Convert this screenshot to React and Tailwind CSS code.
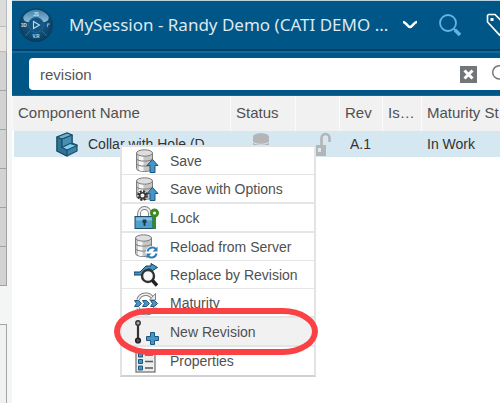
import React from "react";

function Compass() {
  return (
    <svg viewBox="0 0 36 36" className="size-9 shrink-0" aria-hidden="true">
      <defs>
        <radialGradient id="ball" cx="50%" cy="45%" r="55%">
          <stop offset="0" stopColor="#1c5f8c" />
          <stop offset="0.7" stopColor="#0f4a70" />
          <stop offset="1" stopColor="#083a5e" />
        </radialGradient>
        <linearGradient id="shine" x1="0" y1="0" x2="0" y2="1">
          <stop offset="0" stopColor="#3f83ad" />
          <stop offset="1" stopColor="#8dbcd8" />
        </linearGradient>
      </defs>
      <circle cx="18" cy="18" r="17" fill="url(#ball)" />
      <path d="M5.500 9.500a15 15 0 0 1 25 0c1 4-2.500 6-5.500 5.500a8 8 0 0 0-14 0c-3 .5-6.500-1.500-5.500-5.500z" fill="url(#shine)" />
      <path d="M12 24l-5 5M24 24l5 5" stroke="#2f709a" strokeWidth="1" />
      <circle cx="18" cy="18" r="7.500" fill="#135582" stroke="#1f6490" />
      <path d="M15.500 14.500v7l6-3.500z" fill="none" stroke="#c3dbe8" strokeWidth="1.100" />
      <g fill="#cfe1ec" fontSize="4.500" fontWeight="700" fontFamily="Liberation Sans, sans-serif" textAnchor="middle">
        <text x="18" y="8.500">JS</text>
        <text x="6" y="19.500">3D</text>
        <text x="30" y="19.500">i²</text>
        <text x="18" y="31">V.R</text>
      </g>
    </svg>
  );
}

function Magnifier({ className }) {
  return (
    <svg viewBox="0 0 24 24" className={className} fill="none" stroke="currentColor" aria-hidden="true">
      <circle cx="10" cy="10" r="8" strokeWidth="1.800" />
      <path d="M15.500 15.500l2 2" strokeWidth="2" />
      <path d="M17 17l5 5" strokeWidth="3.500" />
    </svg>
  );
}

function Tag() {
  return (
    <svg viewBox="0 0 24 24" className="size-6 shrink-0" fill="none" stroke="#fff" strokeWidth="1.600" aria-hidden="true">
      <path d="M1.500 2.500v6.500l12 13 8-8-12.500-12.500h-6.500z" />
      <rect x="4.500" y="5" width="3" height="3" fill="#fff" stroke="none" />
    </svg>
  );
}

function Part() {
  return (
    <svg viewBox="0 0 24 26" className="block h-[26px] w-6" aria-hidden="true" stroke="#1c4f6b" strokeWidth="1.200" strokeLinejoin="round">
      <path d="M2 6l10-4 5 2v8l5 2v6l-10 5-10-5z" fill="#3c83a6" />
      <path d="M2 6l5 2v8.500l5 2.500v6l-10-5z" fill="#2f7397" />
      <path d="M7 8l10-4v8.500l-10 4z" fill="#4790b4" />
      <path d="M2 6l10-4 5 2-10 4z" fill="#6fb0cc" />
      <path d="M7 16.500l8-4 7 2-10 4.500z" fill="#7fd0f0" />
    </svg>
  );
}

function Disk() {
  return (
    <g stroke="#7c7c7c" strokeWidth="1">
      <path d="M2.500 5v15.500c0 4 16 4 16 0v-15.500z" fill="#c6c6c6" />
      <path d="M5 7v15c1 .8 3 1.200 4.500 1.200v-15z" fill="#f7f7f7" stroke="none" />
      <path d="M2.500 10.500c0 3.500 16 3.500 16 0M2.500 15.500c0 3.500 16 3.500 16 0" fill="none" />
      <ellipse cx="10.500" cy="5" rx="8" ry="3.200" fill="#dedede" />
    </g>
  );
}

const blueStroke = { fill: "#4596c8", stroke: "#1f567e", strokeWidth: 1 };

const icons = {
  save: (
    <>
      <Disk />
      <path d="M18.500 11.500l5.500 6h-3v7h-5v-7h-3z" {...blueStroke} />
    </>
  ),
  options: (
    <>
      <Disk />
      <path d="M18.500 11.500l5.500 6h-3v7h-5v-7h-3z" {...blueStroke} />
      <circle cx="8.500" cy="19.500" r="4.300" fill="none" stroke="#333" strokeWidth="2.200" strokeDasharray="2 1.380" />
      <circle cx="8.500" cy="19.500" r="2.800" fill="#f2f2f2" stroke="#333" strokeWidth="1.600" />
    </>
  ),
  lock: (
    <>
      <path d="M5 12v-3a5.500 6 0 0 1 11 0v3" fill="none" stroke="#808080" strokeWidth="3.800" />
      <path d="M5 12v-3a5.500 6 0 0 1 11 0v3" fill="none" stroke="#ececec" strokeWidth="2" />
      <rect x="1" y="11.500" width="18" height="12" fill="#4f9fcb" stroke="#1d4f70" />
      <path d="M2 12.500h16v3h-16z" fill="#83c0df" />
      <path d="M9 15h3v2.500h-1v3h-1v-3h-1z" fill="#263b49" stroke="#263b49" />
      <circle cx="20.500" cy="8" r="3" fill="none" stroke="#3a8a22" strokeWidth="3" />
      <path d="M20.500 11v13M20.500 18h-2.500" stroke="#3a8a22" strokeWidth="3" />
    </>
  ),
  reload: (
    <>
      <g transform="translate(-1 -1)">
        <Disk />
      </g>
      <circle cx="18" cy="18.500" r="6.500" fill="#fff" />
      <path d="M13.500 17.500a5 5 0 0 1 8.500-2.500M22.500 19.500a5 5 0 0 1-8.500 2.500" fill="none" stroke="#2f7fb0" strokeWidth="2" />
      <path d="M23.500 12.500v5h-5zM12.500 24.500v-5h5z" fill="#2f7fb0" />
    </>
  ),
  replace: (
    <>
      <path d="M0 10h6l6-6h5v-2.500l6.500 4-6.500 4v-2.500h-3.500l-6 6h-7.500z" {...blueStroke} stroke="#173b55" />
      <circle cx="14" cy="14" r="6" fill="#f7f7f7" stroke="#333" strokeWidth="2.400" />
      <path d="M18 18l5 5.500" stroke="#222" strokeWidth="3.400" />
    </>
  ),
  maturity: (
    <>
      <path d="M4 10a8 8 0 0 1 15-1M21 17a9 9 0 0 1-17 1" fill="none" stroke="#808080" strokeWidth="3.400" />
      <path d="M4 10a8 8 0 0 1 15-1M21 17a9 9 0 0 1-17 1" fill="none" stroke="#f2f2f2" strokeWidth="1.600" />
      <path d="M21.500 3.500v6.500h-6z" fill="#eee" stroke="#808080" />
      <path d="M.5 10.500h4l3 3-3 3h-4l2-3zM8.500 10.500h4l3 3-3 3h-4l2-3zM16.500 10.500h4l3 3-3 3h-4l2-3z" {...blueStroke} />
    </>
  ),
  revision: (
    <>
      <path d="M4 5v16" stroke="#333" strokeWidth="2.200" />
      <circle cx="4" cy="4" r="2.200" fill="#aaa" stroke="#333" strokeWidth="1.400" />
      <circle cx="4" cy="21.500" r="2.300" fill="#555" stroke="#222" strokeWidth="1.600" />
      <path d="M16.500 13.500h4v4h4v4h-4v4h-4v-4h-4v-4h4z" {...blueStroke} />
    </>
  ),
  properties: (
    <>
      <rect x="2" y="2" width="19" height="22" fill="#ededed" stroke="#777" strokeWidth="1.300" />
      <path d="M4.500 5h4v4h-4zM4.500 11.500h4v4h-4zM4.500 18h4v4h-4z" {...blueStroke} />
      <path d="M11 7h8M11 13.500h8M11 20h8" stroke="#555" strokeWidth="1.300" />
    </>
  ),
};

const menu = [
  { icon: "save", label: "Save" },
  { icon: "options", label: "Save with Options", group: true },
  { icon: "lock", label: "Lock", group: true },
  { icon: "reload", label: "Reload from Server" },
  { icon: "replace", label: "Replace by Revision" },
  { icon: "maturity", label: "Maturity", group: true },
  { icon: "revision", label: "New Revision", group: true, active: true },
  { icon: "properties", label: "Properties" },
];

function ContextMenu() {
  return (
    <ul className="absolute top-[145px] left-[120px] z-10 w-[196px] border-2 border-[#e1e3e4] border-b-[#cfd1d2] bg-white text-[14px] leading-5 text-[#505050]">
      {menu.map((item) => (
        <li
          key={item.label}
          className={`relative border-[#e4e5e6] last:border-b-0 ${item.group ? "h-[29px] border-b-2" : "h-7 border-b"} ${item.active ? "z-10 bg-[#f1f1f1]" : ""}`}
        >
          <button type="button" className="flex h-full w-full items-center gap-[11px] pl-3 text-left whitespace-nowrap">
            <svg viewBox="0 0 25 26" className="h-[26px] w-[25px] shrink-0" aria-hidden="true">
              {icons[item.icon]}
            </svg>
            {item.label}
          </button>
          {item.active && (
            <span className="pointer-events-none absolute -top-[10px] -right-1 -bottom-[10px] -left-2 rounded-[36px/24px] border-[6px] border-[#fa4144]" />
          )}
        </li>
      ))}
    </ul>
  );
}

function SideStrip() {
  return (
    <div className="flex w-3 shrink-0 flex-col bg-[#f4f5f5]">
      <div className="h-[27px] w-[7px] border-r border-b border-[#b9bbbc] bg-[#dcdcdc]" />
      <div className="h-[25px] w-[7px] border-r border-b border-[#b9bbbc] bg-[#e6e6df]" />
      {[1, 2, 3, 4, 5, 6].map((n) => (
        <div key={n} className="h-[39px] w-[7px] border-r border-b border-[#a0a2a3] bg-[#d2d2d2]" />
      ))}
      <div className="mt-[38px] w-[7px] flex-1 border-t border-r border-[#a2a5a6] bg-[#f1f1f1]" />
    </div>
  );
}

const headCell = "h-[35px] overflow-hidden border-l border-[#fbfbfb] pl-[5px] text-left font-normal whitespace-nowrap";

export default function App() {
  return (
    <div className="relative flex min-h-screen overflow-hidden bg-white font-['Liberation_Sans',Arial,sans-serif] text-[15px] text-[#505050]">
      <SideStrip />
      <main className="min-w-0 flex-1 overflow-hidden border-t border-[#b6d0df]">
        <header className="flex h-[50px] items-center border-b-2 border-[#00426a] bg-[#005686] pl-[6px] text-white">
          <Compass />
          <h1 className="ml-[15px] w-[318px] shrink-0 font-['Noto_Sans',sans-serif] text-[17px] leading-6 whitespace-nowrap text-[#dce9f1]">
            MySession - Randy Demo (CATI DEMO ...
          </h1>
          <button type="button" aria-label="Switch session" className="ml-[15px] shrink-0">
            <svg viewBox="0 0 16 10" className="h-[10px] w-4" fill="none" stroke="#fff" strokeWidth="2.500" aria-hidden="true">
              <path d="M1 2c3 0 4.500 5 7 5s4-5 7-5" />
            </svg>
          </button>
          <button type="button" aria-label="Search" className="ml-5 shrink-0 text-[#62b4ea]">
            <Magnifier className="size-6" />
          </button>
          <button type="button" aria-label="Tags" className="ml-6 shrink-0">
            <Tag />
          </button>
        </header>

        <form className="h-[45px] border-t-2 border-b border-[#14699b] bg-[#005686] pt-[5px] pl-[17px]">
          <div className="flex h-8 items-center rounded-l bg-white">
            <input
              type="text"
              aria-label="Search text"
              defaultValue="revision"
              className="h-8 min-w-0 flex-1 bg-transparent pl-[11px] text-[15px] text-[#555] outline-none"
            />
            <button type="reset" aria-label="Clear search" className="size-[17px] shrink-0 bg-[#737679]">
              <svg viewBox="0 0 17 17" className="size-[17px]" stroke="#fff" strokeWidth="3" aria-hidden="true">
                <path d="M4.500 4.500l8 8M12.500 4.500l-8 8" />
              </svg>
            </button>
            <div className="ml-[14px] w-[9px] shrink-0 overflow-hidden text-[#777]">
              <Magnifier className="size-[20px]" />
            </div>
          </div>
        </form>

        <table className="w-full table-fixed border-separate border-spacing-0">
          <colgroup>
            <col className="w-[218px]" />
            <col className="w-[65px]" />
            <col className="w-[44px]" />
            <col className="w-[43px]" />
            <col className="w-[39px]" />
            <col />
          </colgroup>
          <thead>
            <tr className="bg-[#f1f1f1]">
              <th className={headCell}>Component Name</th>
              <th className={headCell}>Status</th>
              <th className={headCell} aria-label="Lock state" />
              <th className={headCell}>Rev</th>
              <th className={headCell}>Is…</th>
              <th className={headCell}>Maturity St</th>
            </tr>
          </thead>
          <tbody>
            <tr className="h-[26px] bg-[#d5e7f0] text-[14px] text-[#333]">
              <td className="border-l-2 border-white p-0">
                <div className="flex h-[26px] items-center gap-[9px] pl-[41px] whitespace-nowrap">
                  <Part />
                  Collar with Hole (D...
                </div>
              </td>
              <td className="p-0 pl-[23px]">
                <svg viewBox="0 0 16 22" className="block h-[22px] w-4" fill="#b3b5b6" aria-hidden="true">
                  <path d="M0 4c0-5 16-5 16 0v14c0 5-16 5-16 0z" />
                  <path d="M0 9c2 3 14 3 16 0" fill="none" stroke="#d5e7f0" />
                </svg>
              </td>
              <td className="p-0 pl-[19px]">
                <svg viewBox="0 0 18 24" className="block h-6 w-[18px]" aria-hidden="true">
                  <path d="M7.500 14v-8a4 4 0 0 1 8 0v4" fill="none" stroke="#b3b5b6" strokeWidth="2.600" />
                  <rect x="0" y="13" width="12" height="11" fill="#b3b5b6" />
                  <rect x="4" y="16" width="3" height="4" fill="#d5e7f0" />
                </svg>
              </td>
              <td className="p-0 pl-[11px]">A.1</td>
              <td className="p-0" />
              <td className="p-0 pl-[6px] whitespace-nowrap">In Work</td>
            </tr>
          </tbody>
        </table>
      </main>
      <ContextMenu />
    </div>
  );
}
